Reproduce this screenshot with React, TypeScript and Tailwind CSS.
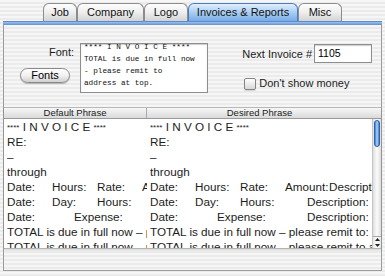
import React from "react";

const stripes =
    "bg-[repeating-linear-gradient(180deg,#f6f6f6_0px,#f6f6f6_2px,#ebebeb_2px,#ebebeb_4px)]";

const tabs = [
    { label: "Job", w: "w-[34px]" },
    { label: "Company", w: "w-[67px]" },
    { label: "Logo", w: "w-[44px]" },
    { label: "Invoices & Reports", w: "w-[110px]", active: true },
    { label: "Misc", w: "w-[44px]" },
];

function Tab({ label, w, active }: { label: string; w: string; active?: boolean }) {
    return (
        <div
            className={
                active
                    ? `${w} h-[18px] flex items-center justify-center rounded-t-[6px] border border-b-0 border-[#4a7cc0] bg-gradient-to-b from-[#e2effd] via-[#a9cdf3] to-[#78abe6] text-[11px] text-[#111]`
                    : `${w} h-[18px] flex items-center justify-center rounded-t-[6px] border border-b-0 border-[#8c8c8c] bg-gradient-to-b from-[#fefefe] via-[#eeeeee] to-[#d3d3d3] text-[11px] text-[#111]`
            }
        >
            {label}
        </div>
    );
}

function Stars() {
    return <span className="text-[8px] align-top relative top-[1px]">****</span>;
}

// wide = desired column, which has room for the trailing "Description:" cells
function RowContent({ i, wide }: { i: number; wide: boolean }) {
    switch (i) {
        case 0:
            return (
                <>
                    <Stars /> I N V O I C E <Stars />
                </>
            );
        case 1:
            return <>RE:</>;
        case 2:
            return <>–</>;
        case 3:
            return <>through</>;
        case 4:
            return (
                <>
                    <span className="inline-block w-[45px]">Date:</span>
                    <span className="inline-block w-[45px]">Hours:</span>
                    <span className="inline-block w-[45px]">Rate:</span>
                    <span className="inline-block w-[44px]">Amount:</span>
                    {wide && <span>Description:</span>}
                </>
            );
        case 5:
            return (
                <>
                    <span className="inline-block w-[45px]">Date:</span>
                    <span className="inline-block w-[45px]">Day:</span>
                    <span className="inline-block w-[67px]">Hours:</span>
                    {wide && <span>Description:</span>}
                </>
            );
        case 6:
            return (
                <>
                    <span className="inline-block w-[67px]">Date:</span>
                    <span className="inline-block w-[90px]">Expense:</span>
                    {wide && <span>Description:</span>}
                </>
            );
        case 7:
            return <>TOTAL is due in full now – please remit to:</>;
        default:
            return <>TOTAL is due in full now – please remit to address at top.</>;
    }
}

const rowIdx = [0, 1, 2, 3, 4, 5, 6, 7, 8];

function Column({ width, wide }: { width: string; wide: boolean }) {
    return (
        <div className={`${width} flex flex-col overflow-hidden`}>
            {rowIdx.map((i) => (
                <div
                    key={i}
                    className="h-[15px] shrink-0 pl-[3px] whitespace-nowrap overflow-hidden text-[11.7px] leading-[15px] text-[#1c1c1c]"
                >
                    <RowContent i={i} wide={wide} />
                </div>
            ))}
        </div>
    );
}

export default function App() {
    return (
        <div
            className={`w-[385px] h-[276px] overflow-hidden ${stripes} pt-[3px] font-['Liberation_Sans',Arial,sans-serif] text-black`}
        >
            <div className="flex justify-center">
                {tabs.map((t) => (
                    <Tab key={t.label} {...t} />
                ))}
            </div>
            <div className="mx-[3px] h-[4px] bg-gradient-to-b from-[#9fc2ec] via-[#7fa9e0] to-[#5e8fd2] border-t border-[#5f8cc9]" />

            <div className={`mx-[3px] h-[246px] border-x border-b border-[#9c9c9c] ${stripes} flex flex-col`}>
                <div className="h-[82px] shrink-0 pt-[18px] flex items-start">
                    <div className="w-[72px] flex flex-col items-end">
                        <div className="mt-[3px] pr-[2px] text-[11px] leading-[13px] text-[#1c1c1c]">Font:</div>
                        <button className="mt-[9px] mr-[6px] w-[50px] h-[15px] rounded-full border border-[#8a8a8a] bg-gradient-to-b from-white via-[#f1f1f1] to-[#d0d0d0] shadow-[0_1px_1px_rgba(0,0,0,0.25)] text-[11px] leading-[13px]">
                            Fonts
                        </button>
                    </div>
                    <div className="ml-[4px] w-[128px] h-[50px] border border-[#8e8e8e] bg-white overflow-hidden shadow-[inset_0_1px_1px_rgba(0,0,0,0.2)]">
                        <div className="-mt-[3px] pl-[3px] font-['Liberation_Mono',monospace] text-[7.7px] leading-[12px] whitespace-pre text-[#111]">
                            {"**** I N V O I C E ****\nTOTAL is due in full now\n- please remit to\naddress at top."}
                        </div>
                    </div>
                    <div className="ml-auto mr-[9px] mt-[1px] flex flex-col">
                        <div className="flex items-center gap-[2px]">
                            <span className="text-[11px] leading-[13px] pt-[2px] text-[#1c1c1c]">Next Invoice #</span>
                            <div className="w-[58px] h-[19px] border border-[#8e8e8e] bg-white shadow-[inset_0_1px_1px_rgba(0,0,0,0.2)] pl-[3px] text-[10.5px] leading-[17px]">
                                1105
                            </div>
                        </div>
                        <div className="mt-[14px] pl-[2px] flex items-center gap-[3px]">
                            <div className="w-[12px] h-[12px] rounded-[2px] border border-[#858585] bg-gradient-to-b from-white to-[#d8d8d8] shadow-[0_1px_1px_rgba(0,0,0,0.15)]" />
                            <span className="text-[11px] leading-[13px] text-[#1c1c1c]">Don't show money</span>
                        </div>
                    </div>
                </div>

                <div className="h-[142px] shrink-0 flex flex-col border-b border-[#b4b4b4] shadow-[0_1px_2px_rgba(0,0,0,0.15)]">
                    <div className="h-[12px] shrink-0 flex border-t border-b border-t-[#b8b8b8] border-b-[#9a9a9a] bg-gradient-to-b from-[#f7f7f7] to-[#dadada] text-[9.5px] leading-[10px] text-[#222]">
                        <div className="w-[143px] text-center border-r border-[#a9a9a9]">Default Phrase</div>
                        <div className="flex-1 text-center pr-[9px]">Desired Phrase</div>
                    </div>
                    <div className="flex-1 flex bg-white overflow-hidden">
                        <Column width="w-[143px]" wide={false} />
                        <Column width="w-[225px]" wide={true} />
                        <div className="w-[9px] flex flex-col border-l border-[#c4c4c4] bg-gradient-to-r from-[#dedede] via-[#fbfbfb] to-[#dedede]">
                            <div className="mt-[1px] mx-[1px] h-[27px] rounded-full border border-[#2f62ab] bg-gradient-to-r from-[#3b7bd4] via-[#b3d6f8] to-[#3b7bd4]" />
                            <div className="flex-1" />
                            <div className="h-[12px] border-t border-[#a8a8a8] flex flex-col items-center justify-around bg-gradient-to-r from-[#e6e6e6] via-white to-[#e6e6e6]">
                                <svg width="5" height="3" viewBox="0 0 5 3">
                                    <path d="M2.5 0 L5 3 L0 3 Z" fill="#222" />
                                </svg>
                                <svg width="5" height="3" viewBox="0 0 5 3">
                                    <path d="M0 0 L5 0 L2.5 3 Z" fill="#222" />
                                </svg>
                            </div>
                        </div>
                    </div>
                </div>
                <div className="flex-1" />
            </div>
        </div>
    );
}
